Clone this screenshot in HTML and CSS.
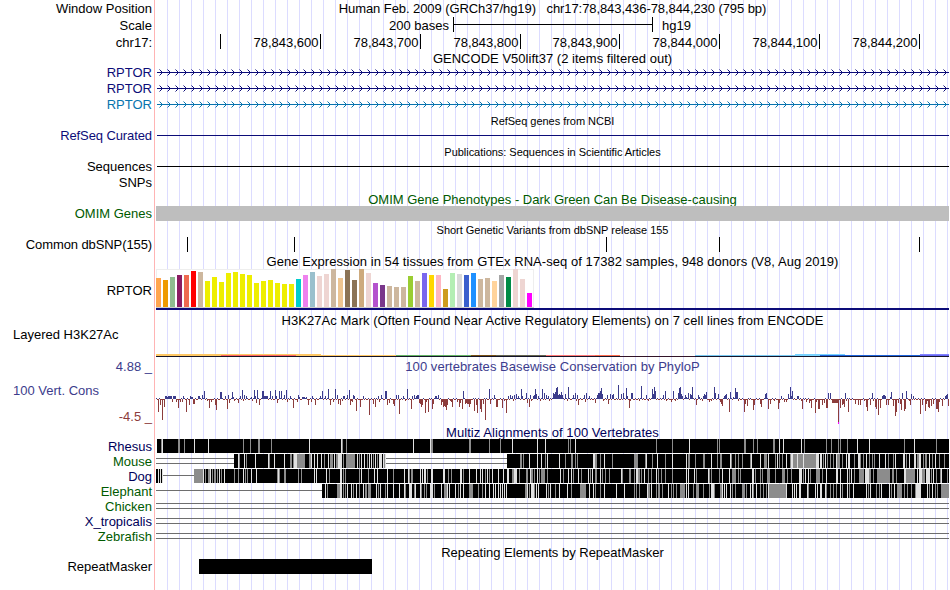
FILE: index.html
```
<!DOCTYPE html>
<html lang="en">
<head>
    <meta charset="UTF-8">
    <meta name="viewport" content="width=device-width, initial-scale=1.0">
    <title>Genome Browser - chr17:78,843,436-78,844,230</title>
    <link rel="stylesheet" href="styles.css">
</head>
<body>
    <main class="browser">
        <div class="row row-17">
            <div class="label">Window Position</div>
            <div class="title position">Human Feb. 2009 (GRCh37/hg19) &nbsp; chr17:78,843,436-78,844,230 (795 bp)</div>
        </div>
        <div class="row row-17">
            <div class="label">Scale</div>
            <div class="scale">
                <span class="scale-size">200 bases</span>
                <span class="scale-bar"></span>
                <span>hg19</span>
            </div>
        </div>
        <div class="row row-16">
            <div class="label">chr17:</div>
            <svg class="track" id="ruler" viewBox="156 0 793 16"></svg>
        </div>

        <div class="row row-14"><div class="title gencode">GENCODE V50lift37 (2 items filtered out)</div></div>
        <div class="row row-16 navy">
            <div class="label">RPTOR</div>
            <svg class="track gene" viewBox="156 0 793 16"></svg>
        </div>
        <div class="row row-16 navy">
            <div class="label">RPTOR</div>
            <svg class="track gene" viewBox="156 0 793 16"></svg>
        </div>
        <div class="row row-16 blue">
            <div class="label">RPTOR</div>
            <svg class="track gene" viewBox="156 0 793 16"></svg>
        </div>

        <div class="row row-15"><div class="title small">RefSeq genes from NCBI</div></div>
        <div class="row row-16 navy">
            <div class="label tight">RefSeq Curated</div>
            <div class="line"></div>
        </div>

        <div class="row row-15"><div class="title small">Publications: Sequences in Scientific Articles</div></div>
        <div class="row row-16">
            <div class="label">Sequences</div>
            <div class="line"></div>
        </div>
        <div class="row row-16"><div class="label">SNPs</div></div>

        <div class="row row-16 green"><div class="title low">OMIM Gene Phenotypes - Dark Green Can Be Disease-causing</div></div>
        <div class="row row-15 green">
            <div class="label">OMIM Genes</div>
            <div class="omim"></div>
        </div>

        <div class="row row-16"><div class="title small">Short Genetic Variants from dbSNP release 155</div></div>
        <div class="row row-15">
            <div class="label tight">Common dbSNP(155)</div>
            <svg class="track" id="snps" viewBox="156 0 793 15"></svg>
        </div>

        <div class="row row-17"><div class="title low loose">Gene Expression in 54 tissues from GTEx RNA-seq of 17382 samples, 948 donors (V8, Aug 2019)</div></div>
        <div class="row row-42">
            <div class="label">RPTOR</div>
            <svg class="track" id="gtex" viewBox="156 0 793 42"></svg>
        </div>

        <div class="row row-17"><div class="title low loose">H3K27Ac Mark (Often Found Near Active Regulatory Elements) on 7 cell lines from ENCODE</div></div>
        <div class="row row-29">
            <div class="label wide">Layered H3K27Ac</div>
            <svg class="track" id="h3k27ac" viewBox="156 0 793 29"></svg>
        </div>

        <div class="row row-16 indigo">
            <div class="label low">4.88 _</div>
            <div class="title low loose">100 vertebrates Basewise Conservation by PhyloP</div>
        </div>
        <div class="row row-51 indigo">
            <div class="label wide cons">
                <span>100 Vert. Cons</span>
                <span class="min">-4.5 _</span>
            </div>
            <svg class="track" id="phylop" viewBox="156 0 793 51"></svg>
        </div>

        <div class="row row-15 navy-dark"><div class="title multiz loose">Multiz Alignments of 100 Vertebrates</div></div>
        <div class="row row-15 navy-dark">
            <div class="label">Rhesus</div>
            <svg class="track align" data-species="rhesus" viewBox="156 0 793 15"></svg>
        </div>
        <div class="row row-15 green">
            <div class="label">Mouse</div>
            <svg class="track align" data-species="mouse" viewBox="156 0 793 15"></svg>
        </div>
        <div class="row row-15 navy-dark">
            <div class="label">Dog</div>
            <svg class="track align" data-species="dog" viewBox="156 0 793 15"></svg>
        </div>
        <div class="row row-15 green">
            <div class="label">Elephant</div>
            <svg class="track align" data-species="elephant" viewBox="156 0 793 15"></svg>
        </div>
        <div class="row row-15 green">
            <div class="label">Chicken</div>
            <svg class="track align" data-species="chicken" viewBox="156 0 793 15"></svg>
        </div>
        <div class="row row-15 navy-dark">
            <div class="label">X_tropicalis</div>
            <svg class="track align" data-species="xtropicalis" viewBox="156 0 793 15"></svg>
        </div>
        <div class="row row-15 green">
            <div class="label">Zebrafish</div>
            <svg class="track align" data-species="zebrafish" viewBox="156 0 793 15"></svg>
        </div>

        <div class="row row-15"><div class="title multiz">Repeating Elements by RepeatMasker</div></div>
        <div class="row row-15">
            <div class="label">RepeatMasker</div>
            <svg class="track" id="repeats" viewBox="156 0 793 15"></svg>
        </div>
    </main>
    <script src="tracks.js"></script>
</body>
</html>
```
FILE: styles.css
```
* {
    margin: 0;
    padding: 0;
    box-sizing: border-box;
}

body {
    font-family: "Liberation Sans", Arial, sans-serif;
    font-size: 13px;
    color: #000;
    background: #fff;
    overflow: hidden;
}

/* red divider, blank label column, then a guide line every 12px */
.browser {
    width: 950px;
    height: 590px;
    background:
        linear-gradient(#ffb4b4, #ffb4b4) 154px 0 / 1px 100% no-repeat,
        linear-gradient(#fff, #fff) 0 0 / 156px 100% no-repeat,
        linear-gradient(90deg, #dcdcff 1px, transparent 1px) 11px 0 / 12px 100%;
}

.row {
    display: grid;
    grid-template-columns: 152px 793px;
    grid-template-rows: 100%;
    column-gap: 4px;
    white-space: nowrap;
}

.row-14 { height: 14px; line-height: 18px; }
.row-15 { height: 15px; line-height: 15px; }
.row-16 { height: 16px; line-height: 18px; }
.row-17 { height: 17px; line-height: 17px; }
.row-29 { height: 29px; line-height: 13px; }
.row-42 { height: 42px; line-height: 44px; }
.row-51 { height: 51px; line-height: 36px; }

.label {
    grid-column: 1;
    text-align: right;
}

.label.wide {
    text-align: left;
    padding-left: 13px;
}

.title {
    grid-column: 2;
    text-align: center;
}

.title.small {
    font-size: 11px;
    line-height: 19px;
    letter-spacing: -0.03px;
}

.low {
    line-height: 20px;
}

.multiz {
    line-height: 18px;
}

.position { letter-spacing: -0.08px; }
.gencode { letter-spacing: 0.02px; }
.loose { letter-spacing: 0.05px; }
.tight { letter-spacing: -0.1px; }

.track {
    display: block;
    grid-column: 2;
    width: 793px;
    height: 100%;
    overflow: hidden;
    shape-rendering: crispEdges;
}

.track text {
    font-size: 13px;
    text-anchor: end;
}

.navy { color: #0c0c78; }
.navy-dark { color: #00005a; }
.blue { color: #0874ae; }
.green { color: #005a00; }
.indigo { color: #3c3c8c; }

.scale {
    display: flex;
    align-items: flex-start;
}

.scale-size {
    width: 293px;
    text-align: right;
}

.scale-bar {
    width: 200px;
    height: 15px;
    margin: 0 9px 0 4px;
    border-left: 1px solid #000;
    border-right: 1px solid #000;
    background: linear-gradient(#000, #000) 0 7px / 100% 1px no-repeat;
}

.line {
    height: 1px;
    margin: 8px 0 0 1px;
    background: currentColor;
}

.omim {
    height: 15px;
    background: #bebebe;
}

.cons {
    display: flex;
    flex-direction: column;
}

.min {
    align-self: flex-end;
    line-height: 15px;
    color: #8c3c3c;
}
```
FILE: tracks.js
```
const SVG_NS = 'http://www.w3.org/2000/svg';
const LEFT = 156;
const RIGHT = 949;

function rect(svg, x, y, width, height, fill) {
    const el = document.createElementNS(SVG_NS, 'rect');
    Object.entries({ x, y, width, height, fill }).forEach(([k, v]) => el.setAttribute(k, v));
    svg.appendChild(el);
}

// Ruler
const ruler = document.getElementById('ruler');
const ticks = [[220, ''], [320, '78,843,600'], [420, '78,843,700'], [520, '78,843,800'],
    [619, '78,843,900'], [719, '78,844,000'], [819, '78,844,100'], [919, '78,844,200']];
ticks.forEach(([x, name]) => {
    rect(ruler, x, 0, 1, 15, '#000');
    const text = document.createElementNS(SVG_NS, 'text');
    text.setAttribute('x', x - 1.5);
    text.setAttribute('y', 13);
    text.textContent = name;
    ruler.appendChild(text);
});

// Gene introns with strand arrows
document.querySelectorAll('.gene').forEach(svg => {
    rect(svg, LEFT + 1, 8, RIGHT - LEFT - 1, 1, 'currentColor');
    let d = '';
    for (let x = 159; x < RIGHT; x += 8) {
        d += `M${x}.5 5.5l3 3l-3 3`;
    }
    const path = document.createElementNS(SVG_NS, 'path');
    path.setAttribute('d', d);
    path.setAttribute('fill', 'none');
    path.setAttribute('stroke', 'currentColor');
    path.setAttribute('stroke-width', '1');
    path.setAttribute('shape-rendering', 'auto');
    svg.appendChild(path);
});

// Common SNPs
const snps = document.getElementById('snps');
[187, 294, 606, 719, 919].forEach(x => rect(snps, x, 0, 1, 15, '#000'));

// GTEx: height and colour of each tissue
const tissues = `29 FFA54F,27 EE9A00,30 8FBC8F,32 8B1C62,32 EE6A50,36 FF0000,35 CDB79E,26 EEEE00,30 EEEE00,
25 EEEE00,34 EEEE00,35 EEEE00,33 EEEE00,32 EEEE00,24 EEEE00,26 EEEE00,27 EEEE00,24 EEEE00,23 EEEE00,23 EEEE00,
28 00CDCD,32 EE82EE,35 9AC0CD,31 EED5D2,33 EED5D2,38 CDB79E,29 EEC591,37 8B7355,27 8B7355,38 CDAA7D,34 EED5D2,
24 B452CD,22 7A378B,21 CDB79E,20 CDB79E,20 CDB79E,31 9ACD32,26 CDB79E,34 7A67EE,32 FFD700,32 FFB6C1,18 CD9B1D,
34 B4EEB4,33 D9D9D9,32 3A5FCD,34 1E90FF,28 CDB79E,29 CDB79E,26 FFD39B,32 A6A6A6,30 008B45,38 EED5D2,28 EED5D2,14 FF00FF`;
const gtex = document.getElementById('gtex');
rect(gtex, 156, 0, 378, 39, '#eee');
rect(gtex, 157, 1, 376, 37, '#fff');
rect(gtex, 156, 38, 378, 1, '#ccc');
tissues.split(',').forEach((t, i) => {
    const [height, color] = t.trim().split(' ');
    rect(gtex, LEFT + i * 7, 38 - height, 5, height, '#' + color);
});
rect(gtex, LEFT, 39, 793, 2, '#0c0c78');

// H3K27Ac layers
const h3 = document.getElementById('h3k27ac');
[[156, 321, 26, 'ffc864'], [156, 221, 27, 'ffc864'], [221, 296, 27, 'ff6464'], [296, 396, 27, 'ffc864'],
    [396, 471, 27, '64b464'], [471, 496, 27, '785014'], [496, 546, 27, '646450'], [546, 595, 27, 'ff7878'],
    [595, 620, 27, 'ff6e50'], [695, 795, 27, '78c8f0'], [795, 845, 26, '78d2ff'],
    [795, 820, 27, '78d2ff'], [820, 920, 27, '1e64dc'], [920, 949, 26, '8282ff'], [920, 949, 27, '6464f0']
].forEach(([from, to, y, color]) => rect(h3, from, y, to - from, 1, '#' + color));
rect(h3, LEFT, 28, 793, 1, '#141428');
rect(h3, 620, 28, 75, 1, '#321428');

// PhyloP scores as position:height
const gains = `165:3 166:3 167:2 168:3 169:3 170:3 171:3 172:3 173:3 174:3 175:3 178:3 180:3 182:3 183:3 190:3 191:2 192:2 198:3 199:3
202:4 204:8 220:7 221:7 225:3 228:4 232:7 233:2 240:3 242:9 244:4 246:3 251:2 254:9 255:3 257:9 262:8 263:8 264:3 265:3 266:3 267:3
270:8 272:3 275:9 276:3 279:8 281:8 284:4 286:9 287:8 290:3 298:4 299:2 302:2 303:2 304:2 306:2 311:8 312:3 320:3 322:8 325:3 328:10
335:10 337:4 343:3 344:3 347:4 349:9 353:4 354:3 363:3 378:3 381:4 385:8 386:8 396:4 398:4 403:3 407:10 412:3 414:4 416:3 417:4 418:4
435:3 436:3 438:4 463:8 489:10 490:4 494:4 506:3 508:3 510:4 512:3 514:4 516:5 518:3 521:10 522:3 526:6 530:4 533:3 534:4 535:10 536:5
538:3 542:10 544:6 546:4 548:3 553:6 554:5 555:7 556:11 557:12 558:4 559:5 560:4 561:7 562:4 565:5 568:12 573:4 575:6 577:4 584:4 586:6
589:3 595:3 597:4 598:6 599:6 600:8 601:11 602:5 607:4 610:5 612:4 613:5 618:14 621:5 623:6 626:11 627:3 631:6 632:6 641:13 646:4
652:10 653:5 654:12 655:8 663:4 665:8 671:4 673:8 678:6 679:11 680:12 681:5 682:3 685:4 686:2 688:6 690:5 691:4 692:12 698:4 699:2
703:3 704:5 705:4 706:7 714:12 715:6 718:5 724:3 725:4 726:5 730:7 733:2 735:11 736:7 737:7 765:5 766:6 781:3 788:5 790:12 791:3
792:8 797:3 798:3 824:11 828:6 830:6 836:2 845:6 872:6 882:3 883:4 884:4 885:3 890:2 891:7 898:4 902:6 906:8 911:5 913:3 922:4 925:4
926:2 945:3 946:4 947:5`;
const losses = `158:13 160:6 162:21 164:8 172:3 176:3 178:9 180:3 182:3 186:13 189:6 193:5 194:5 209:9 211:3 215:6 216:11 227:10 229:4 238:4
256:4 259:6 277:4 287:3 293:9 297:3 308:6 311:3 315:6 330:6 333:3 338:5 340:6 350:6 352:3 356:12 360:8 369:16 373:5 375:8 379:3
387:6 389:4 393:5 394:7 399:15 411:10 419:4 420:5 421:8 422:6 425:14 426:3 428:13 432:10 433:5 441:6 442:3 443:8 444:7 445:8 446:11
447:6 451:3 452:8 457:3 459:8 460:4 462:10 465:5 466:4 467:5 468:5 469:8 470:5 474:12 476:6 477:14 480:10 481:13 483:5 485:21 490:5
496:8 497:8 502:9 506:14 527:4 529:8 578:6 585:3 595:4 608:5 629:9 671:3 696:6 709:3 720:3 721:5 722:7 729:13 744:13 745:5 747:7
753:11 754:6 760:5 761:8 768:10 770:5 778:10 779:4 784:3 786:3 802:10 806:3 809:4 811:9 815:14 816:3 818:10 819:10 822:6 824:4
826:9 827:9 832:4 833:4 834:4 835:4 836:4 837:4 838:24 840:9 842:6 843:5 844:8 848:13 855:5 858:6 860:6 866:8 867:12 870:6 875:8
876:10 878:16 880:9 886:6 888:6 893:7 895:17 896:13 898:4 900:5 901:11 904:12 905:10 910:6 920:15 922:6 925:12 926:5 928:8 929:9
931:7 933:5 936:10 937:10 938:13 939:3 942:7 948:7`;
const phylop = document.getElementById('phylop');
const scores = {};
gains.split(/\s+/).forEach(s => { const [x, h] = s.split(':'); scores[x] = +h; });
losses.split(/\s+/).forEach(s => { const [x, h] = s.split(':'); scores[x] = -h; });
for (let x = LEFT; x < RIGHT; x++) {
    // unlisted bases score close to zero
    const score = scores[x] || ((x * 7) % 11 < 4 ? 1 : -((x * 5) % 9 === 0 ? 2 : 1));
    if (score > 0) {
        rect(phylop, x, 26 - score, 1, score, '#3c3c8c');
    } else {
        rect(phylop, x, 26, 1, -score, '#8c3c3c');
    }
}
rect(phylop, 838, 49, 1, 2, '#ff00ff');

// Alignments. Stripes are position, shade (g = grey, l = light), optional width
const alignments = {
    rhesus: {
        blocks: [[157, 949]],
        stripes: `161g 162l 178g2 184g 194l 208l 243g 250g 258g2 271g 309l 341l 342g 346g 413l 430l 431g2 469g2 489g 500g 512l 537l
        545l 568g 570g 575l 656g 672g 689l 717g 719g 744g2 753g 757g 773g2 779l 783l 801l 804g 826g 831g 838g 840g 847g 857l 869l
        904g 914l 936g`
    },
    mouse: {
        blocks: [[234, 386], [507, 949]],
        lines: [4, 9],
        gaps: [[156, 234], [386, 507]],
        stripes: `238l 239g 244l 246g 255l 268l 269g 274l 284l 290g2 293g 294l3 297g8 309g2 311l 314l 317l 321l 324g 328l 330g3 334l
        336g2 338l4 343g 346g9 357l 359g 361l 364l 367g 369l 371l 373g 375l 377g 379l3 383l 384g 385l 520g2 523g 529l 537l 541l 545g
        547l 559l 565g 571g2 575g 577g 593l2 595g2 600g 604l 612g 634g3 637g 645g 646l 652g 657l 665g 672l 686l 688g2 695g 703g2 711l
        717g 720g2 730l 731g 735g 738g 742g 750g 751l 760l 764g3 768l 775g 777l 779g 782g 786l 790g 791l2 793g4 797l 798g5 803l
        804g12 816l3 820l2 823g 825l 827g 830g 833g 836l 837g3 842g 846l 848l2 854g 858l2 860g 863g 866l 869g 872g 874g 879l 885l
        888g 893g 895l 903l2 906g 909l 914l2 917g3 919l2 923g 925g2 929l 932g 935l 939g 944g`
    },
    dog: {
        blocks: [[156, 163], [194, 949]],
        lines: [6],
        gaps: [[163, 194]],
        stripes: `158l 160l 162l 194g9 203l 205g 208g2 210l 212g 214g2 217g 219l 221g 224l 234g 238g 243l 245g 247g 251l 256l 277g
        278l 279g 284g2 298g 301g 314l 316l 326l 329g 340l2 343g 345g 359g 361l 368g 374l 377l 387l 393g 404l 408l 409g 411g2 420l
        422l 424l2 427g 431l2 443l2 448g 451g 460l2 463g 469l 476l 480l 482l 485g 487l 489g 492l 498l 503l 507l2 512g2 514l3 519g
        526g2 530l 531g2 534g 537l 539g 541g4 547g 560l 563g 568l 571l 573g 578l 581g 588l 590g 592l 595g2 600l 602g 605g 609g 621l
        622g 629g2 634g 636l2 638g2 641g 644l 648g 651g 656l 658g 661g 665g 672g 686l 688l 694l 696g 708l 709g 711g 719g 722l 729l
        732g4 738g 740g 752l2 755g 760g 762g 767g3 775g 782g3 787g 791g 799l2 801l 803g 805l 808l 810g 816g4 822g 826l 836l2 840l 847l
        849g 851l 854g 859g5 865l4 869g2 873g 877g13 892g2 896g 904l2 906g2 908g7 917l 919l3 922g3 926l4 931g 933l 936g 940g 941l 947g`
    },
    elephant: {
        blocks: [[322, 949]],
        lines: [6],
        gaps: [[156, 322]],
        stripes: `325l 327g 337g3 340l2 343g 345g 347l 351l 353g 356l 359g 363l 365g2 368g3 376l 378g 380l 385g 387l 393l 399l 404l
        405g 409l3 414g 415l 420l 421g 424g 426g 430l3 434g 441l 444g3 447l 449l 455l 458g 460l 463l 469g4 478g 482g 485l 489l 493l
        495l 498l 500l 502l 504l 506l 525g2 527l 529g 531l3 534g 536l 538l 546l 548g 550l 555g 559l 567l 571g 580g6 589l 593l 595g
        600g 604l 616l 624l 634g 636g 639g 647l 648g2 651l 656g 658g2 662g 668l 671g 673g 676g 680g5 686l 688l 693g 696g3 703g 709g
        711l3 714g 720g2 722l 724l 726l 730l 732g 735g 742g3 746g 750l 752l 753g 756l 760g 763g 766g 768l 769g17 786l 792l 794l 796l
        799l2 807l 808g 815l 817l 820l2 825l 826g 830g 833g 836g 840l 842g 847l 849g 853l 866l 868g 870l 876g 879g 881l 889l 891g
        894l 897g5 904g 907g 911g 915g 916l5 927l 929g 932l 935g 937g 941g8`
    }
};
const unaligned = { blocks: [], lines: [4, 9], gaps: [[LEFT, RIGHT]], stripes: '' };

document.querySelectorAll('.align').forEach(svg => {
    const data = alignments[svg.dataset.species] || unaligned;
    (data.gaps || []).forEach(([from, to]) => {
        data.lines.forEach(y => rect(svg, from, y, to - from, 1, '#6e6e6e'));
    });
    data.blocks.forEach(([from, to]) => rect(svg, from, 0, to - from, 14, '#000'));
    (data.stripes.match(/\d+[gl]\d*/g) || []).forEach(stripe => {
        const [, x, shade, width] = stripe.match(/(\d+)([gl])(\d*)/);
        rect(svg, x, 0, width || 1, 14, shade === 'g' ? '#8c8c8c' : '#e1e1e1');
    });
});

// RepeatMasker
rect(document.getElementById('repeats'), 199, 0, 173, 15, '#000');
```
